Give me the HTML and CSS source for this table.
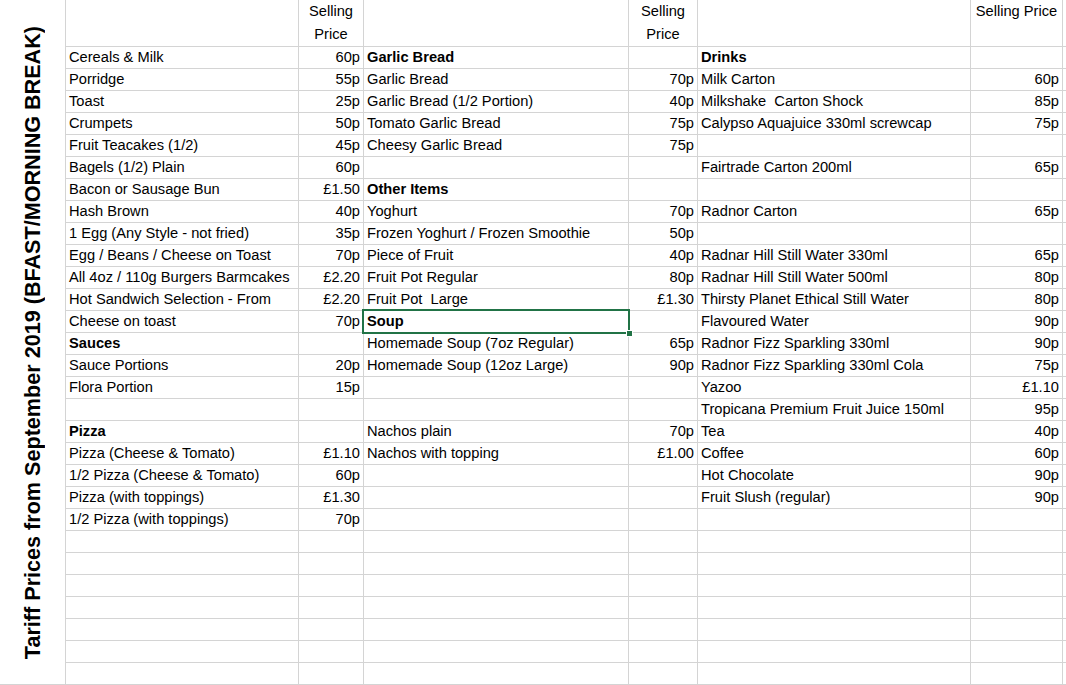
FILE: index.html
```html
<!DOCTYPE html>
<html>
<head>
<meta charset="utf-8">
<link rel="stylesheet" href="styles.css">
</head>
<body>
<div class="sheet">
  <div class="title"><span>Tariff Prices from September 2019 (BFAST/MORNING BREAK)</span></div>

  <div class="c"></div><div class="c hd">Selling Price</div><div class="c"></div><div class="c hd">Selling Price</div><div class="c"></div><div class="c hd">Selling Price</div><div class="c"></div>

  <div class="c">Cereals &amp; Milk</div><div class="c r">60p</div><div class="c b">Garlic Bread</div><div class="c r"></div><div class="c b">Drinks</div><div class="c r"></div><div class="c"></div>
  <div class="c">Porridge</div><div class="c r">55p</div><div class="c">Garlic Bread</div><div class="c r">70p</div><div class="c">Milk Carton</div><div class="c r">60p</div><div class="c"></div>
  <div class="c">Toast</div><div class="c r">25p</div><div class="c">Garlic Bread (1/2 Portion)</div><div class="c r">40p</div><div class="c">Milkshake  Carton Shock</div><div class="c r">85p</div><div class="c"></div>
  <div class="c">Crumpets</div><div class="c r">50p</div><div class="c">Tomato Garlic Bread</div><div class="c r">75p</div><div class="c">Calypso Aquajuice 330ml screwcap</div><div class="c r">75p</div><div class="c"></div>
  <div class="c">Fruit Teacakes (1/2)</div><div class="c r">45p</div><div class="c">Cheesy Garlic Bread</div><div class="c r">75p</div><div class="c"></div><div class="c r"></div><div class="c"></div>
  <div class="c">Bagels (1/2) Plain</div><div class="c r">60p</div><div class="c"></div><div class="c r"></div><div class="c">Fairtrade Carton 200ml</div><div class="c r">65p</div><div class="c"></div>
  <div class="c">Bacon or Sausage Bun</div><div class="c r">£1.50</div><div class="c b">Other Items</div><div class="c r"></div><div class="c"></div><div class="c r"></div><div class="c"></div>
  <div class="c">Hash Brown</div><div class="c r">40p</div><div class="c">Yoghurt</div><div class="c r">70p</div><div class="c">Radnor Carton</div><div class="c r">65p</div><div class="c"></div>
  <div class="c">1 Egg (Any Style - not fried)</div><div class="c r">35p</div><div class="c">Frozen Yoghurt / Frozen Smoothie</div><div class="c r">50p</div><div class="c"></div><div class="c r"></div><div class="c"></div>
  <div class="c">Egg / Beans / Cheese on Toast</div><div class="c r">70p</div><div class="c">Piece of Fruit</div><div class="c r">40p</div><div class="c">Radnar Hill Still Water 330ml</div><div class="c r">65p</div><div class="c"></div>
  <div class="c">All 4oz / 110g Burgers Barmcakes</div><div class="c r">£2.20</div><div class="c">Fruit Pot Regular</div><div class="c r">80p</div><div class="c">Radnar Hill Still Water 500ml</div><div class="c r">80p</div><div class="c"></div>
  <div class="c">Hot Sandwich Selection - From</div><div class="c r">£2.20</div><div class="c">Fruit Pot  Large</div><div class="c r">£1.30</div><div class="c">Thirsty Planet Ethical Still Water</div><div class="c r">80p</div><div class="c"></div>
  <div class="c">Cheese on toast</div><div class="c r">70p</div><div class="c b sel">Soup</div><div class="c r"></div><div class="c">Flavoured Water</div><div class="c r">90p</div><div class="c"></div>
  <div class="c b">Sauces</div><div class="c r"></div><div class="c">Homemade Soup (7oz Regular)</div><div class="c r">65p</div><div class="c">Radnor Fizz Sparkling 330ml</div><div class="c r">90p</div><div class="c"></div>
  <div class="c">Sauce Portions</div><div class="c r">20p</div><div class="c">Homemade Soup (12oz Large)</div><div class="c r">90p</div><div class="c">Radnor Fizz Sparkling 330ml Cola</div><div class="c r">75p</div><div class="c"></div>
  <div class="c">Flora Portion</div><div class="c r">15p</div><div class="c"></div><div class="c r"></div><div class="c">Yazoo</div><div class="c r">£1.10</div><div class="c"></div>
  <div class="c"></div><div class="c r"></div><div class="c"></div><div class="c r"></div><div class="c">Tropicana Premium Fruit Juice 150ml</div><div class="c r">95p</div><div class="c"></div>
  <div class="c b">Pizza</div><div class="c r"></div><div class="c">Nachos plain</div><div class="c r">70p</div><div class="c">Tea</div><div class="c r">40p</div><div class="c"></div>
  <div class="c">Pizza (Cheese &amp; Tomato)</div><div class="c r">£1.10</div><div class="c">Nachos with topping</div><div class="c r">£1.00</div><div class="c">Coffee</div><div class="c r">60p</div><div class="c"></div>
  <div class="c">1/2 Pizza (Cheese &amp; Tomato)</div><div class="c r">60p</div><div class="c"></div><div class="c r"></div><div class="c">Hot Chocolate</div><div class="c r">90p</div><div class="c"></div>
  <div class="c">Pizza (with toppings)</div><div class="c r">£1.30</div><div class="c"></div><div class="c r"></div><div class="c">Fruit Slush (regular)</div><div class="c r">90p</div><div class="c"></div>
  <div class="c">1/2 Pizza (with toppings)</div><div class="c r">70p</div><div class="c"></div><div class="c r"></div><div class="c"></div><div class="c r"></div><div class="c"></div>

  <div class="c"></div><div class="c"></div><div class="c"></div><div class="c"></div><div class="c"></div><div class="c"></div><div class="c"></div>
  <div class="c"></div><div class="c"></div><div class="c"></div><div class="c"></div><div class="c"></div><div class="c"></div><div class="c"></div>
  <div class="c"></div><div class="c"></div><div class="c"></div><div class="c"></div><div class="c"></div><div class="c"></div><div class="c"></div>
  <div class="c"></div><div class="c"></div><div class="c"></div><div class="c"></div><div class="c"></div><div class="c"></div><div class="c"></div>
  <div class="c"></div><div class="c"></div><div class="c"></div><div class="c"></div><div class="c"></div><div class="c"></div><div class="c"></div>
  <div class="c"></div><div class="c"></div><div class="c"></div><div class="c"></div><div class="c"></div><div class="c"></div><div class="c"></div>
  <div class="c"></div><div class="c"></div><div class="c"></div><div class="c"></div><div class="c"></div><div class="c"></div><div class="c"></div>
</div>
</body>
</html>
```
FILE: styles.css
```css
html, body {
  margin: 0;
  padding: 0;
  background: #fff;
  width: 1066px;
  height: 685px;
  overflow: hidden;
}

.sheet {
  display: grid;
  grid-template-columns: 65px 232px 64px 264px 68px 272px 91px 3px;
  grid-template-rows: 46px repeat(29, 21px);
  gap: 1px;
  padding-bottom: 1px;
  background: #d4d4d4;
  width: 1066px;
  font-family: "Liberation Sans", Arial, sans-serif;
  font-size: 14.67px;
  color: #000;
}

.title {
  grid-column: 1;
  grid-row: 1 / -1;
  background: #fff;
  display: flex;
  align-items: center;
  justify-content: center;
  padding-top: 2px;
}

.title span {
  writing-mode: vertical-rl;
  transform: rotate(180deg);
  font-weight: bold;
  font-size: 21.6px;
  white-space: nowrap;
}

.c {
  background: #fff;
  line-height: 21px;
  padding: 0 3px;
  white-space: pre;
  overflow: visible;
  min-width: 0;
}

.r {
  text-align: right;
  padding-right: 3px;
}

.b {
  font-weight: bold;
}

.hd {
  line-height: 23px;
  text-align: center;
  white-space: normal;
  padding: 0 1px;
}

.sel {
  position: relative;
}

.sel::after {
  content: "";
  position: absolute;
  top: -2px;
  left: -2px;
  right: -2px;
  bottom: -2px;
  border: 2px solid #217346;
  pointer-events: none;
}

.sel::before {
  content: "";
  position: absolute;
  right: -5px;
  bottom: -5px;
  width: 5px;
  height: 5px;
  background: #217346;
  border: 1px solid #fff;
  z-index: 1;
}
```
